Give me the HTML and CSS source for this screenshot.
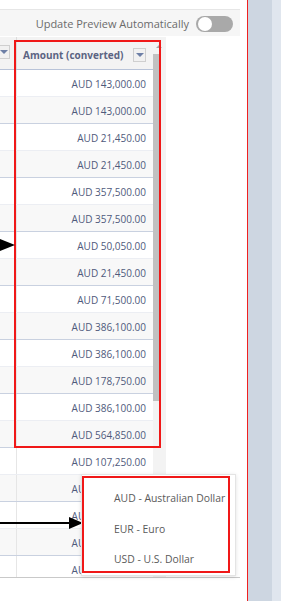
FILE: index.html
```html
<!DOCTYPE html>
<html lang="en">
<head>
    <meta charset="UTF-8">
    <meta name="viewport" content="width=device-width, initial-scale=1.0">
    <title>Currency Preview</title>
    <link rel="stylesheet" href="styles.css">
</head>
<body>
    <div class="page">
        <div class="main">
            <div class="toolbar">
                <span class="toolbar-label">Update Preview Automatically</span>
                <span class="toggle"><span class="knob"></span></span>
            </div>
            <div class="grid">
                <div class="table">
                    <div class="cols">
                        <div class="head-row">
                            <div class="cell-left"><span class="menu-btn menu-cut"></span></div>
                            <div class="cell-amt head">Amount (converted) <span class="menu-btn"></span></div>
                        </div>
                        <div class="row"><div class="cell-left"></div><div class="cell-amt">AUD 143,000.00</div></div>
                        <div class="row alt"><div class="cell-left"></div><div class="cell-amt">AUD 143,000.00</div></div>
                        <div class="row"><div class="cell-left"></div><div class="cell-amt">AUD 21,450.00</div></div>
                        <div class="row alt"><div class="cell-left"></div><div class="cell-amt">AUD 21,450.00</div></div>
                        <div class="row"><div class="cell-left"></div><div class="cell-amt">AUD 357,500.00</div></div>
                        <div class="row alt"><div class="cell-left"></div><div class="cell-amt">AUD 357,500.00</div></div>
                        <div class="row"><div class="cell-left"></div><div class="cell-amt">AUD 50,050.00</div></div>
                        <div class="row alt"><div class="cell-left"></div><div class="cell-amt">AUD 21,450.00</div></div>
                        <div class="row"><div class="cell-left"></div><div class="cell-amt">AUD 71,500.00</div></div>
                        <div class="row alt"><div class="cell-left"></div><div class="cell-amt">AUD 386,100.00</div></div>
                        <div class="row"><div class="cell-left"></div><div class="cell-amt">AUD 386,100.00</div></div>
                        <div class="row alt"><div class="cell-left"></div><div class="cell-amt">AUD 178,750.00</div></div>
                        <div class="row"><div class="cell-left"></div><div class="cell-amt">AUD 386,100.00</div></div>
                        <div class="row alt"><div class="cell-left"></div><div class="cell-amt">AUD 564,850.00</div></div>
                        <div class="row"><div class="cell-left"></div><div class="cell-amt">AUD 107,250.00</div></div>
                        <div class="row alt"><div class="cell-left"></div><div class="cell-amt">AUD 107,250.00</div></div>
                        <div class="row"><div class="cell-left"></div><div class="cell-amt">AUD 107,250.00</div></div>
                        <div class="row alt"><div class="cell-left"></div><div class="cell-amt">AUD 107,250.00</div></div>
                        <div class="row"><div class="cell-left"></div><div class="cell-amt">AUD 107,250.00</div></div>
                    </div>
                    <div class="scrollbar">
                        <span class="scroll-up"></span>
                        <span class="thumb"></span>
                    </div>
                </div>
            </div>

            <!-- annotation overlays -->
            <div class="mark mark-column"></div>
            <svg class="arrow arrow-top" width="16" height="14" viewBox="0 0 16 14">
                <polygon points="0,1 15,7 0,13" fill="#000"/>
            </svg>
            <svg class="arrow arrow-bottom" width="84" height="14" viewBox="0 0 84 14">
                <line x1="0" y1="7" x2="72" y2="7" stroke="#000" stroke-width="2"/>
                <polygon points="69,1 83,7 69,13" fill="#000"/>
            </svg>
            <div class="dropdown">
                <div class="mark mark-menu"></div>
                <div class="option">AUD - Australian Dollar</div>
                <div class="option">EUR - Euro</div>
                <div class="option">USD - U.S. Dollar</div>
            </div>
        </div>
        <div class="side"></div>
    </div>
</body>
</html>
```

FILE: styles.css
```css
body {
    margin: 0;
    font-family: "Open Sans", "Noto Sans", sans-serif;
    background-color: white;
}

.page {
    display: flex;
    width: 281px;
    height: 601px;
    overflow: hidden;
}

.main {
    position: relative;
    width: 248px;
    border-right: 1px solid #f02020;
    padding-top: 9px;
    box-sizing: border-box;
}

.side {
    flex: 1;
    background-color: #cdd6e1;
    border-right: 9px solid #e0e6ee;
}

.toolbar {
    display: flex;
    justify-content: flex-end;
    align-items: center;
    width: 240px;
    height: 27px;
    padding-top: 1px;
    border-top: 1px solid #e6e6e6;
    background-color: #f6f6f6;
    box-sizing: border-box;
}

.toolbar-label {
    font-size: 11px;
    color: #6b6b6b;
    margin-right: 7px;
}

.toggle {
    position: relative;
    display: block;
    width: 37px;
    height: 16px;
    border-radius: 8px;
    background-color: #a9a9a9;
    margin-right: 7px;
}

.knob {
    position: absolute;
    left: 2px;
    top: 1px;
    width: 14px;
    height: 14px;
    border-radius: 50%;
    background-color: white;
}

.grid {
    width: 240px;
    height: 540px;
    margin-top: 1px;
    border-bottom: 1px solid #c9c9c9;
}

.table {
    display: flex;
    width: 166px;
    height: 540px;
    overflow: hidden;
}

.cols {
    width: 153px;
}

.head-row,
.row {
    display: flex;
}

.head-row {
    height: 32px;
    background-color: #f3f3f3;
    border-bottom: 1px solid #b8c3d8;
}

.row {
    height: 26px;
    background-color: white;
    border-bottom: 1px solid #eceef3;
}

.row.alt {
    background-color: #f8f8f8;
    border-bottom-color: #c9d1e0;
}

.cell-left {
    position: relative;
    width: 16px;
    border-right: 1px solid #e6e6e6;
}

.head-row .cell-left {
    border-right-color: #dcdcdc;
}

.cell-amt {
    flex: 1;
    display: flex;
    align-items: center;
    justify-content: flex-end;
    padding: 2px 7px 0 0;
    font-size: 10px;
    color: #4f5a7c;
}

.cell-amt.head {
    justify-content: space-between;
    padding: 3px 7px 0 6px;
    font-weight: bold;
    color: #5b6482;
}

.menu-btn {
    position: relative;
    display: block;
    width: 13px;
    height: 14px;
    border: 1px solid #cfcfcf;
    background-color: #f1f1f1;
    box-sizing: border-box;
}

.menu-btn::after {
    content: "";
    position: absolute;
    left: 2px;
    top: 4px;
    border-left: 4px solid transparent;
    border-right: 4px solid transparent;
    border-top: 4px solid #6d7fa6;
}

.menu-cut {
    position: absolute;
    left: -3px;
    top: 8px;
}

.scrollbar {
    position: relative;
    width: 13px;
    background-color: #f3f3f3;
}

.scroll-up {
    position: absolute;
    left: 3px;
    top: 8px;
    border-left: 3px solid transparent;
    border-right: 3px solid transparent;
    border-bottom: 3px solid #a3a3a3;
}

.thumb {
    position: absolute;
    left: 0;
    top: 17px;
    width: 8px;
    height: 347px;
    background-color: #c1c1c1;
}

.mark {
    position: absolute;
    border: 2px solid #f01818;
    box-sizing: border-box;
}

.mark-column {
    left: 14px;
    top: 40px;
    width: 147px;
    height: 408px;
}

.arrow {
    position: absolute;
    left: 0;
}

.arrow-top {
    top: 238px;
}

.arrow-bottom {
    top: 516px;
}

.dropdown {
    position: absolute;
    left: 81px;
    top: 474px;
    width: 155px;
    height: 102px;
    padding: 12px 0 0 32px;
    box-sizing: border-box;
    background-color: white;
    border: 1px solid #e4e4e4;
    box-shadow: 0 1px 4px rgba(0, 0, 0, 0.12);
}

.mark-menu {
    left: 0;
    top: 1px;
    width: 148px;
    height: 97px;
}

.option {
    height: 30.5px;
    font-size: 10.4px;
    color: #5a5a5a;
    line-height: 22px;
    white-space: nowrap;
}
```
